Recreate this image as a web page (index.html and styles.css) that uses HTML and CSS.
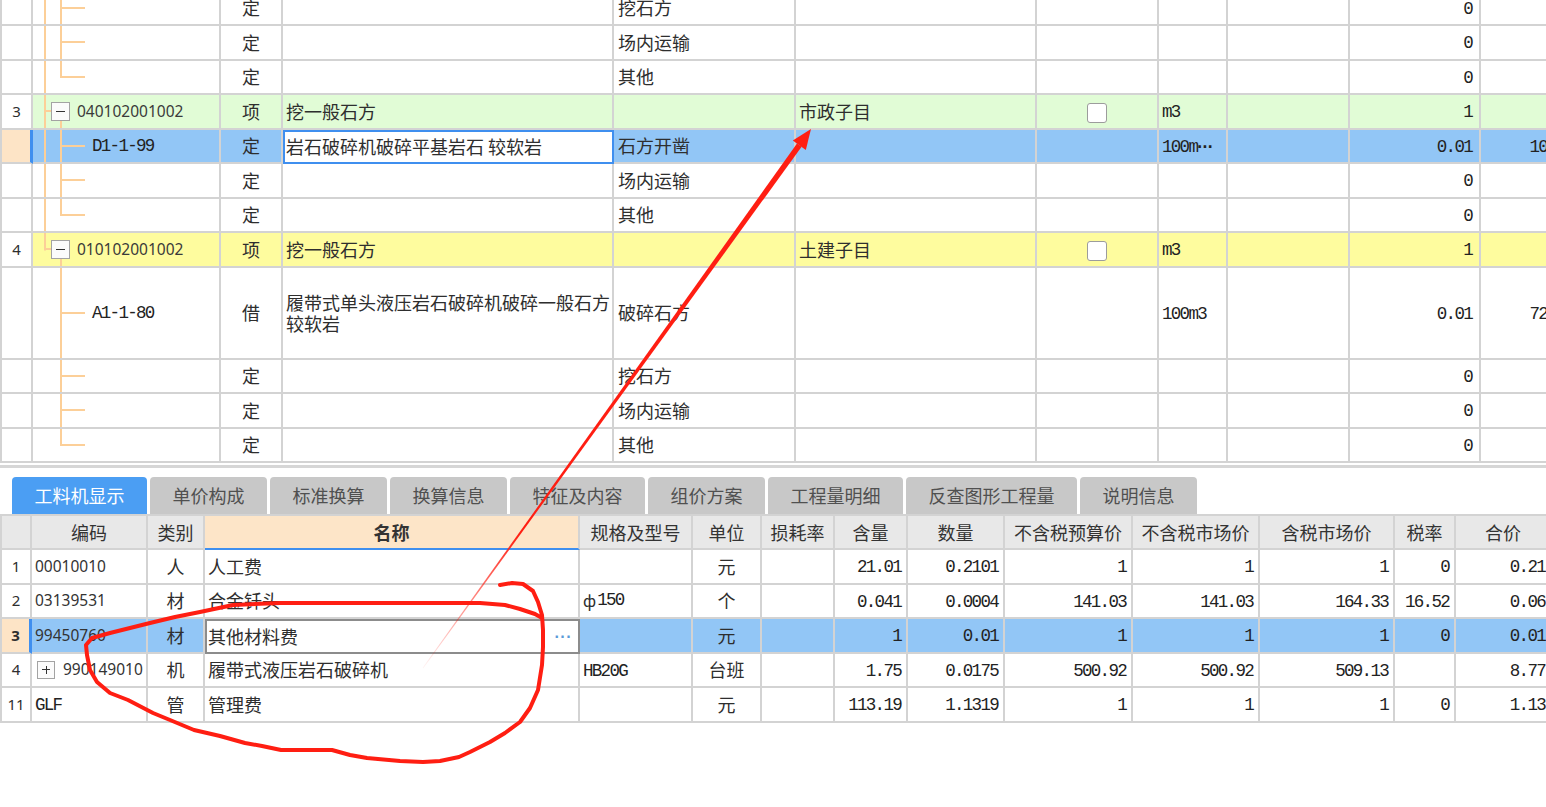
FILE: index.html
```html
<!DOCTYPE html>
<html lang="zh-CN">
<head>
<meta charset="utf-8">
<title>工料机显示</title>
<link rel="stylesheet" href="styles.css">
</head>
<body>
<div class="page">
  <div class="grid-top">
    <div class="tr">
      <div class="rn"></div>
      <div class="tree tc"></div>
      <div class="ct">定</div>
      <div></div>
      <div class="c4">挖石方</div>
      <div></div><div></div><div></div><div></div>
      <div class="cr n">0</div>
      <div></div>
    </div>
    <div class="tr">
      <div class="rn"></div>
      <div class="tree tc"></div>
      <div class="ct">定</div>
      <div></div>
      <div class="c4">场内运输</div>
      <div></div><div></div><div></div><div></div>
      <div class="cr n">0</div>
      <div></div>
    </div>
    <div class="tr">
      <div class="rn"></div>
      <div class="tree tc-last"></div>
      <div class="ct">定</div>
      <div></div>
      <div class="c4">其他</div>
      <div></div><div></div><div></div><div></div>
      <div class="cr n">0</div>
      <div></div>
    </div>
    <div class="tr green">
      <div class="rn num">3</div>
      <div class="tree tp"><span class="bx"></span><span class="code pcode">040102001002</span></div>
      <div class="ct">项</div>
      <div>挖一般石方</div>
      <div class="c4"></div>
      <div>市政子目</div>
      <div class="ct"><span class="chk"></span></div>
      <div class="n">m3</div>
      <div></div>
      <div class="cr n">1</div>
      <div></div>
    </div>
    <div class="tr sel">
      <div class="rn"></div>
      <div class="tree tc"><span class="n ccode">D1-1-99</span></div>
      <div class="ct">定</div>
      <div class="ed">岩石破碎机破碎平基岩石&nbsp;较软岩</div>
      <div class="c4">石方开凿</div>
      <div></div>
      <div></div>
      <div class="n">100m<span class="dots">···</span></div>
      <div></div>
      <div class="cr n">0.01</div>
      <div class="cr n">1004.54</div>
    </div>
    <div class="tr">
      <div class="rn"></div>
      <div class="tree tc"></div>
      <div class="ct">定</div>
      <div></div>
      <div class="c4">场内运输</div>
      <div></div><div></div><div></div><div></div>
      <div class="cr n">0</div>
      <div></div>
    </div>
    <div class="tr">
      <div class="rn"></div>
      <div class="tree tc-last"></div>
      <div class="ct">定</div>
      <div></div>
      <div class="c4">其他</div>
      <div></div><div></div><div></div><div></div>
      <div class="cr n">0</div>
      <div></div>
    </div>
    <div class="tr yellow">
      <div class="rn num">4</div>
      <div class="tree tp-last"><span class="bx"></span><span class="code pcode">010102001002</span></div>
      <div class="ct">项</div>
      <div>挖一般石方</div>
      <div class="c4"></div>
      <div>土建子目</div>
      <div class="ct"><span class="chk"></span></div>
      <div class="n">m3</div>
      <div></div>
      <div class="cr n">1</div>
      <div></div>
    </div>
    <div class="tr tall">
      <div class="rn"></div>
      <div class="tree tc2"><span class="n ccode">A1-1-80</span></div>
      <div class="ct">借</div>
      <div>履带式单头液压岩石破碎机破碎一般石方<br>较软岩</div>
      <div class="c4">破碎石方</div>
      <div></div>
      <div></div>
      <div class="n">100m3</div>
      <div></div>
      <div class="cr n">0.01</div>
      <div class="cr n">7214.38</div>
    </div>
    <div class="tr">
      <div class="rn"></div>
      <div class="tree tc2"></div>
      <div class="ct">定</div>
      <div></div>
      <div class="c4">挖石方</div>
      <div></div><div></div><div></div><div></div>
      <div class="cr n">0</div>
      <div></div>
    </div>
    <div class="tr">
      <div class="rn"></div>
      <div class="tree tc2"></div>
      <div class="ct">定</div>
      <div></div>
      <div class="c4">场内运输</div>
      <div></div><div></div><div></div><div></div>
      <div class="cr n">0</div>
      <div></div>
    </div>
    <div class="tr">
      <div class="rn"></div>
      <div class="tree tc2-last"></div>
      <div class="ct">定</div>
      <div></div>
      <div class="c4">其他</div>
      <div></div><div></div><div></div><div></div>
      <div class="cr n">0</div>
      <div></div>
    </div>
  </div>

  <div class="split"></div>

  <div class="tabs">
    <div class="tab on">工料机显示</div>
    <div class="tab">单价构成</div>
    <div class="tab">标准换算</div>
    <div class="tab">换算信息</div>
    <div class="tab">特征及内容</div>
    <div class="tab">组价方案</div>
    <div class="tab">工程量明细</div>
    <div class="tab">反查图形工程量</div>
    <div class="tab">说明信息</div>
  </div>

  <div class="btable">
    <div class="br bh">
      <div></div>
      <div>编码</div>
      <div>类别</div>
      <div class="name-h">名称</div>
      <div>规格及型号</div>
      <div>单位</div>
      <div>损耗率</div>
      <div>含量</div>
      <div>数量</div>
      <div>不含税预算价</div>
      <div>不含税市场价</div>
      <div>含税市场价</div>
      <div>税率</div>
      <div>合价</div>
    </div>
    <div class="br">
      <div class="rn num">1</div>
      <div class="code">00010010</div>
      <div class="ct">人</div>
      <div>人工费</div>
      <div></div>
      <div class="ct">元</div>
      <div></div>
      <div class="cr n">21.01</div>
      <div class="cr n">0.2101</div>
      <div class="cr n">1</div>
      <div class="cr n">1</div>
      <div class="cr n">1</div>
      <div class="cr n">0</div>
      <div class="cr n">0.21</div>
    </div>
    <div class="br">
      <div class="rn num">2</div>
      <div class="code">03139531</div>
      <div class="ct">材</div>
      <div>合金钎头</div>
      <div><span class="phi">ф</span><span class="n">150</span></div>
      <div class="ct">个</div>
      <div></div>
      <div class="cr n">0.041</div>
      <div class="cr n">0.0004</div>
      <div class="cr n">141.03</div>
      <div class="cr n">141.03</div>
      <div class="cr n">164.33</div>
      <div class="cr n">16.52</div>
      <div class="cr n">0.06</div>
    </div>
    <div class="br bsel">
      <div class="rn num">3</div>
      <div class="code">99450760</div>
      <div class="ct">材</div>
      <div class="ed2"><span>其他材料费</span><span class="more">···</span></div>
      <div></div>
      <div class="ct">元</div>
      <div></div>
      <div class="cr n">1</div>
      <div class="cr n">0.01</div>
      <div class="cr n">1</div>
      <div class="cr n">1</div>
      <div class="cr n">1</div>
      <div class="cr n">0</div>
      <div class="cr n">0.01</div>
    </div>
    <div class="br">
      <div class="rn num">4</div>
      <div class="code"><span class="bx plus sm"></span><span class="pcode2">990149010</span></div>
      <div class="ct">机</div>
      <div>履带式液压岩石破碎机</div>
      <div class="n">HB20G</div>
      <div class="ct">台班</div>
      <div></div>
      <div class="cr n">1.75</div>
      <div class="cr n">0.0175</div>
      <div class="cr n">500.92</div>
      <div class="cr n">500.92</div>
      <div class="cr n">509.13</div>
      <div></div>
      <div class="cr n">8.77</div>
    </div>
    <div class="br">
      <div class="rn num">11</div>
      <div class="n">GLF</div>
      <div class="ct">管</div>
      <div>管理费</div>
      <div></div>
      <div class="ct">元</div>
      <div></div>
      <div class="cr n">113.19</div>
      <div class="cr n">1.1319</div>
      <div class="cr n">1</div>
      <div class="cr n">1</div>
      <div class="cr n">1</div>
      <div class="cr n">0</div>
      <div class="cr n">1.13</div>
    </div>
  </div>

  <svg class="marks" viewBox="0 0 1546 807" width="1546" height="807" aria-hidden="true">
    <defs>
      <linearGradient id="fade" gradientUnits="userSpaceOnUse" x1="423" y1="668" x2="520" y2="533">
        <stop offset="0" stop-color="#ff1e12" stop-opacity="0.05"/>
        <stop offset="1" stop-color="#ff1e12" stop-opacity="1"/>
      </linearGradient>
    </defs>
    <polygon fill="url(#fade)" points="423.3,668.2 801.6,146.8 797.0,143.6 422.7,667.8"/>
    <polygon fill="#ff1e12" points="811,129 805.8,149.9 792.8,140.5"/>
    <path fill="none" stroke="#ff1e12" stroke-width="4" stroke-linecap="round" stroke-linejoin="round"
      d="M500 585 L512 583 L523 584 L533 591 L538 602 L542 615 L543 630 L543 647 L542 665 L538 690 L530 708 L520 722 L505 733 L490 742 L470 752 L459 757 L440 761 L423 762 L400 761 L367 758 L350 755 L332 750 L300 750 L281 750 L262 746 L245 743 L220 736 L194 730 L170 720 L153 713 L128 700 L110 693 L97 682 L90 670 L87 655 L86 645 L92 638 L110 633 L130 628 L150 623 L175 617 L200 612 L233 605 L280 603 L333 603 L400 603 L467 603 L480 603 L505 605 L520 609 L535 614 L542 618"/>
  </svg>
</div>
</body>
</html>
```

FILE: styles.css
```css
* { box-sizing: border-box; }

html, body {
  margin: 0;
  padding: 0;
  background: #fff;
}

body {
  font-family: "Noto Sans CJK SC", "Noto Sans", sans-serif;
  font-size: 18px;
  line-height: 21px;
  color: #2e2e2e;
}

.page {
  position: relative;
  width: 1546px;
  height: 807px;
  overflow: hidden;
  background: #fff;
}

/* ---------- top grid ---------- */
.grid-top {
  margin-top: -8.5px;
  width: 1600px;
}

.tr {
  display: grid;
  grid-template-columns: 33px 188px 62px 331px 182px 241px 122px 69px 122px 131px 119px;
  height: 34.5px;
}

.tr.tall { height: 92px; }

.tr > div,
.br > div {
  display: flex;
  align-items: center;
  min-width: 0;
  padding: 0 3px;
  overflow: hidden;
  white-space: nowrap;
  border-right: 2px solid #d3d3d3;
  border-bottom: 2px solid #d3d3d3;
}

.tr > div:first-child,
.br > div:first-child {
  border-left: 2px solid #d3d3d3;
}

.tr > .c4 { padding-left: 4px; }

.ct { justify-content: center; }
.cr { justify-content: flex-end; }
.tr > .cr { padding-right: 7px; }
.br > .cr { padding-right: 5px; }

.rn { justify-content: center; padding: 0 !important; }

.num {
  font-family: "Noto Sans", sans-serif;
  font-size: 15px;
}

.n {
  font-family: "Liberation Mono", "DejaVu Sans Mono", monospace;
  font-size: 17.5px;
  letter-spacing: -1.7px;
  color: #222;
}

.tr > .n,
.br > .n { padding-top: 3px; }

.tree .n { padding-top: 2px; }

.phi {
  font-size: 16px;
  margin-right: 1px;
}

.code {
  font-family: "Noto Sans", sans-serif;
  font-size: 15.5px;
  color: #333;
}

.dots {
  font-family: "Liberation Sans", sans-serif;
  font-weight: 700;
  letter-spacing: -0.5px;
}

/* row colours */
.green > div:not(:first-child) { background-color: #e1fcd6; }
.yellow > div:not(:first-child) { background-color: #fefc9e; }
.sel > div { background-color: #92c6f6; }
.sel > .rn,
.bsel > .rn {
  background-color: #fde4c6;
  border-right: 3px solid #3f8fef;
}
.bsel > .rn { font-weight: 700; }
.sel > div.ed {
  padding-left: 1px;
  background-color: #fff;
  border: 2px solid #3f8fef;
}

/* tree */
.tree {
  padding: 0 !important;
  background-repeat: no-repeat;
}

.tc, .tc-last, .tp, .tp-last {
  background-image:
    linear-gradient(#fccf98, #fccf98),
    linear-gradient(#fccf98, #fccf98),
    linear-gradient(#fccf98, #fccf98);
}

.tc2, .tc2-last {
  background-image:
    linear-gradient(#fccf98, #fccf98),
    linear-gradient(#fccf98, #fccf98);
}

.tc {
  background-size: 2px 100%, 2px 100%, 25px 2px;
  background-position: 11px 0, 27px 0, 27px 50%;
}

.tc-last {
  background-size: 2px 100%, 2px calc(50% + 1px), 25px 2px;
  background-position: 11px 0, 27px 0, 27px 50%;
}

.tp {
  background-size: 2px 100%, 7px 2px, 2px 7px;
  background-position: 11px 0, 11px 50%, 27px 100%;
}

.tp-last {
  background-size: 2px calc(50% + 1px), 7px 2px, 2px 7px;
  background-position: 11px 0, 11px 50%, 27px 100%;
}

.tc2 {
  background-size: 2px 100%, 25px 2px;
  background-position: 27px 0, 27px 50%;
}

.tc2-last {
  background-size: 2px calc(50% + 1px), 25px 2px;
  background-position: 27px 0, 27px 50%;
}

.bx {
  position: relative;
  flex: none;
  width: 19px;
  height: 19px;
  margin-left: 18px;
  border: 1px solid #a3a3a3;
  background: #fbfbfb;
}

.bx::before {
  content: "";
  position: absolute;
  left: 4px;
  right: 4px;
  top: 8px;
  height: 1px;
  background: #333;
}

.bx.plus::after {
  content: "";
  position: absolute;
  top: 4px;
  bottom: 4px;
  left: 8px;
  width: 1px;
  background: #333;
}

.bx.sm {
  width: 18px;
  height: 18px;
  margin-left: 2px;
}

.bx.sm::before { top: 7.5px; }
.bx.sm::after { left: 7.5px; }

.pcode { margin-left: 7px; color: #3a3a3a; }
.pcode2 { margin-left: 8px; }
.ccode { margin-left: 59px; }

.chk {
  width: 20px;
  height: 20px;
  margin-top: 3px;
  border: 1px solid #9c9c9c;
  border-radius: 3px;
  background: #fff;
}

/* ---------- split & tabs ---------- */
.split {
  height: 5px;
  border-bottom: 3px solid #d6d6d6;
}

.tabs {
  display: flex;
  align-items: flex-end;
  gap: 3px;
  height: 46px;
  padding-left: 12px;
}

.tab {
  display: flex;
  align-items: center;
  height: 37px;
  padding: 0 22.5px;
  border-radius: 4px 4px 0 0;
  background: #c8c8c8;
  color: #505050;
  font-size: 18px;
  white-space: nowrap;
}

.tab.on {
  background: #4b9ef3;
  color: #fff;
}

/* ---------- bottom table ---------- */
.btable {
  width: 1552px;
  border-top: 2px solid #d3d3d3;
}

.br {
  display: grid;
  grid-template-columns: 32px 116px 57px 375px 113px 69px 73px 73px 97px 128px 127px 135px 61px 96px;
  height: 34.5px;
}

.br.bh { height: 34px; }

.bh > div {
  justify-content: center;
  background-color: #e8e8e8;
  color: #333;
}

.bh > div.name-h {
  background-color: #fde5c8;
  border-bottom: 2px solid #3f8fef;
  font-weight: 700;
}

.bsel > div { background-color: #92c6f6; }

.bsel > div.ed2 {
  justify-content: space-between;
  padding-left: 1px;
  padding-right: 6px;
  background-color: #fff;
  border: 2px solid #8c8c8c;
}

.more {
  font-family: "Liberation Sans", sans-serif;
  font-weight: 700;
  color: #5a9ad8;
  font-size: 16px;
  letter-spacing: 0.5px;
}

/* ---------- annotation overlay ---------- */
.marks {
  position: absolute;
  left: 0;
  top: 0;
  pointer-events: none;
}
```
